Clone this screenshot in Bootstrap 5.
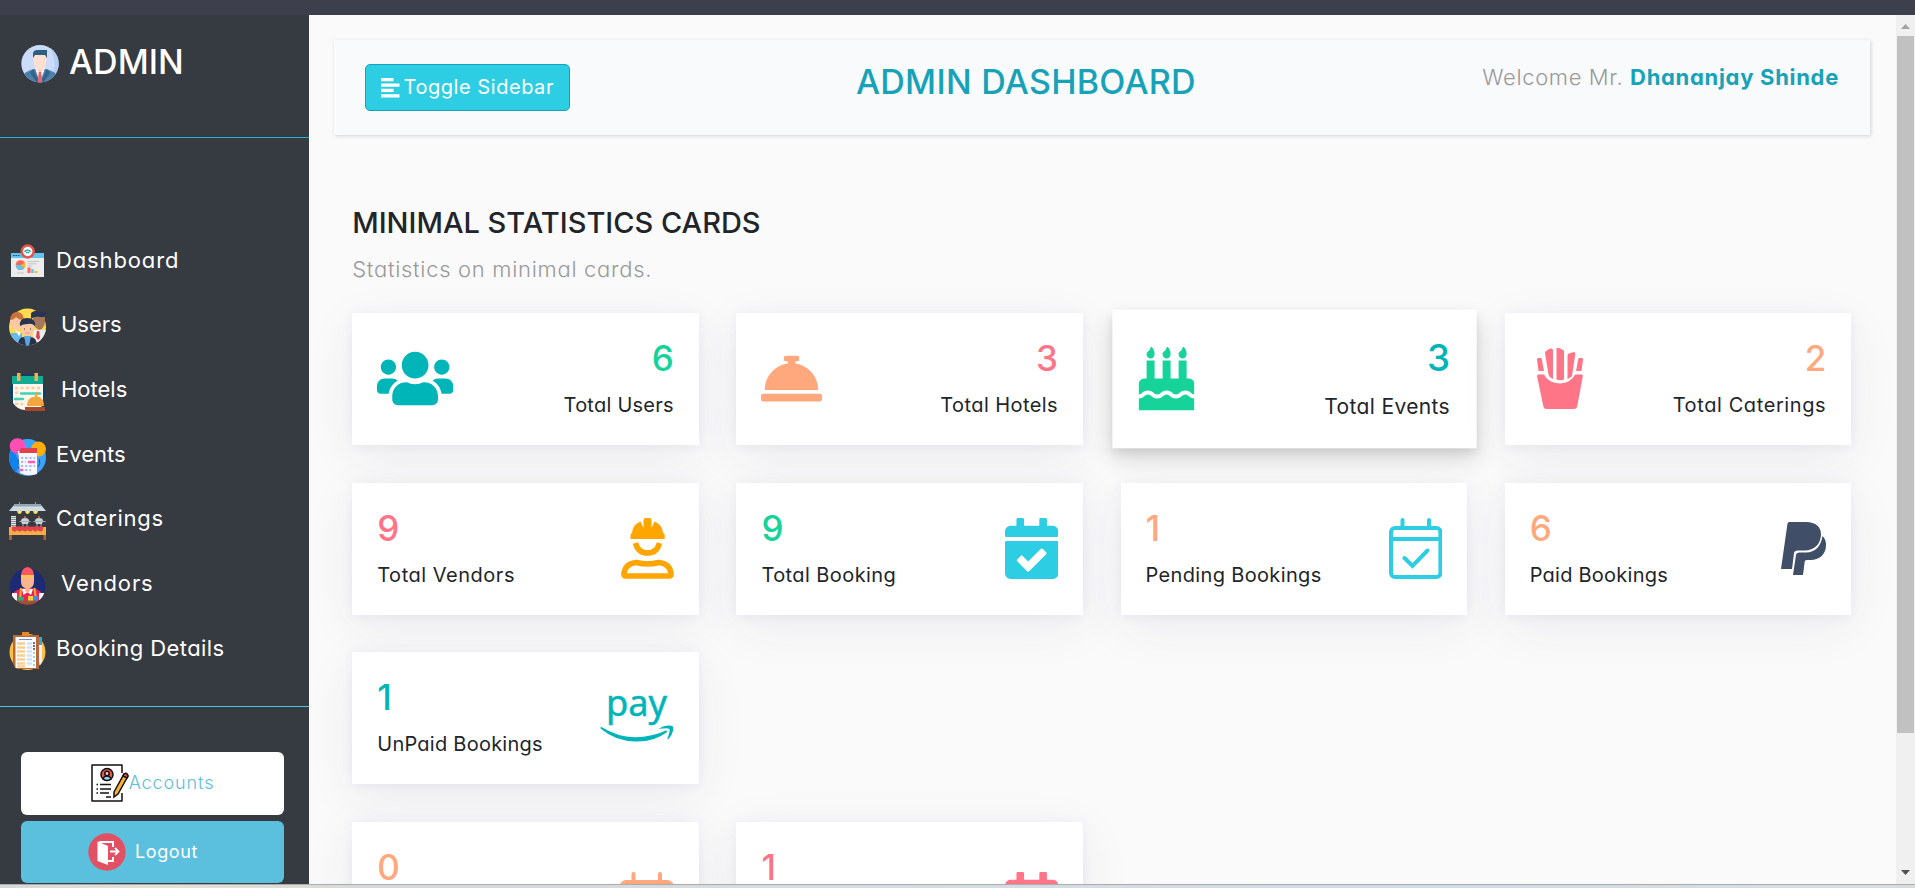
<!DOCTYPE html>
<html lang="en">
<head>
<meta charset="utf-8">
<title>Admin Dashboard</title>
<link href="https://cdn.jsdelivr.net/npm/bootstrap@5.3.0/dist/css/bootstrap.min.css" rel="stylesheet">
<style>
body{height:100vh;overflow:hidden;background:#fafafa;color:#212529;font-family:Inter,"Open Sans",sans-serif;font-feature-settings:"cv11";}
.topstrip{height:15px;background:#3e3f4c;flex:none}
.bottomstrip{height:4px;flex:none;border-top:1px solid #a9adb0;background:linear-gradient(90deg,#d5d8d9,#e6e0d2 8%,#d8dad9 18%,#d5dbe2 50%,#cfdbe6 75%,#d8dcde)}
.sidebar{width:309px;flex:none;background:#363a41;color:#fff}
.brand{height:123px;padding:28px 21px 0;border-bottom:1px solid #29b1cb}
.brand svg{margin-top:2px}
.brand-name{font-size:34px;line-height:37px;font-weight:500;margin-left:10px}
.side-nav{padding:90px 0 25px 9px;border-bottom:1px solid #5bc0de}
.side-nav a{height:64.67px;color:#fff;font-size:22px;text-decoration:none;display:flex;align-items:center}
.side-nav svg{width:38px;height:38px;flex:none;margin:5px 9px 0 0}
.side-nav .wide svg{margin-right:14px}
.side-btns{padding:45px 25px 0 21px}
.side-btns .btn{height:63px;border-radius:6px;border:0;font-size:18px}
.side-btns .btn+.btn{margin-top:6px;height:62px}
.side-btns span{margin-bottom:2px}
.btn-acc,.btn-acc:hover{background:#fff;color:#5bc0de;font-weight:300;letter-spacing:.9px}
.btn-out,.btn-out:hover{background:#5bc0de;color:#fff;letter-spacing:.6px}
.btn-out span{margin:0 19px 0 9px}
.content{padding:25px 26px 0 24.5px;min-width:0}
.head{height:95px;background:#f8fafc;box-shadow:1px 1px 4px rgba(0,0,0,.16);padding:0 31px}
.btn-toggle{margin-top:24px;width:205px;height:47px;background:#2dcee3;border:1px solid #17a2b8;border-radius:5px;color:#fff;font-size:20px;padding:0 0 0 15px;letter-spacing:.55px}
.btn-toggle span{margin-bottom:2px}
.title{margin:21px 0 0;font-size:34px;line-height:42px;font-weight:500;color:#17a2b8;letter-spacing:.26px}
.welcome{margin:20px 0 0;font-size:22px;line-height:34px;font-weight:300;color:#999;letter-spacing:.62px}
.welcome b{font-weight:700;color:#17a2b8;letter-spacing:.7px}
.sec{padding:70px 18.75px 0}
.sec h2{font-size:29px;line-height:36px;font-weight:500;margin:0 0 11px}
.sec p{font-size:22px;line-height:34px;font-weight:300;color:#999;margin:0 0 27px;letter-spacing:.7px}
.stats{--bs-gutter-x:37.5px;margin-bottom:37.67px}
.stat{height:132px;background:#fff;border:0;border-radius:0;box-shadow:0 12px 50px rgba(62,57,107,.07),0 2px 11px rgba(62,57,107,.06);padding:24px 25px 25px;display:flex;flex-direction:row;align-items:center;justify-content:space-between}
.stat.lifted{transform:scale(1.05);box-shadow:0 10px 20px rgba(0,0,0,.14),0 4px 8px rgba(0,0,0,.08)}
.stat.tall{height:162px}
.tall h3{height:102px}
.stat h3{font-size:35px;line-height:42px;font-weight:500;margin:0 0 11px}
.stat span{font-size:20px;line-height:30px;display:block;white-space:nowrap}
.stat svg{height:61px;flex:none}
.fries{margin-left:7px}
.paypal{margin-right:-1px}
.teal{color:#00b5b8}.green{color:#16d39a}.rose{color:#ff7588}.peach{color:#ffa87d}.sky{color:#2dcee3}.amber{color:orange}.navy{color:#404e67}
.sbar{width:19px;background:#f0f0f0;flex:none}
.sbar i{display:block;width:17px;height:697px;background:#c1c1c1;margin:0 1px}
.pay{font-family:"Noto Sans","Open Sans",sans-serif}
.ls2{letter-spacing:.25px}.ls3{letter-spacing:.35px}.ls4{letter-spacing:.42px}.ls5{letter-spacing:.52px}.ls6{letter-spacing:.6px}.ls7{letter-spacing:.72px}.ls8{letter-spacing:.87px}
</style>
</head>
<body class="d-flex flex-column">
<div class="topstrip"></div>
<div class="d-flex flex-fill overflow-hidden">
<aside class="sidebar">
 <div class="brand d-flex align-items-start">
  <svg width="38" height="38" viewBox="0 0 38 38"><defs><clipPath id="c"><circle cx="19" cy="18.700" r="18.700"/></clipPath></defs><g clip-path="url(#c)"><path fill="#cbdcfa" d="M0 0h38v38H0z"/><path fill="#b5cdf5" d="M28 0q9 18 3 30h7V0z"/><path fill="#4c80ac" d="M3 38V29q3-3 10-5h12q7 2 10 5v9z"/><path fill="#376486" d="M12 24l7 14 7-14 3 4-7 10h-6L9 28z"/><path fill="#fff" d="M14 23l5 15 5-15z"/><path fill="#ffc9ba" d="M15.500 19h7v5.500L19 28l-3.500-3.500z"/><path fill="#ffdfd1" d="M12.500 10h13v6q-1 9-6.500 9T12.500 16z"/><path fill="#2f5f80" d="M12 13V8q1-3 4-3h10v8l-2-3H14z"/><path fill="#df6977" d="M17.600 27h2.800l1 11h-4.800z"/></g></svg>
  <span class="brand-name">ADMIN</span>
 </div>
 <nav class="side-nav">
  <a href="#"><svg viewBox="0 0 38 38"><path fill="#ececec" d="M2 9h33v24H2z"/><path fill="#5fc4ef" d="M2 9h33v5H2z"/><path d="M4 11.500h7" stroke="#345" stroke-dasharray="1.500 1"/><circle cx="18.700" cy="7.500" r="7.200" fill="#e2574c"/><circle cx="18.700" cy="7.500" r="4.700" fill="#fff"/><path d="M15.500 8a3.200 3.200 0 0 1 6 0M17 8.500h3" stroke="#3aa" fill="none" stroke-width="1.500"/><circle cx="11.500" cy="21" r="4.800" fill="#ff6455"/><path fill="#ffb420" d="M11.500 21l4.500-2.500q1 3-1 6z"/><path fill="#5fc4ef" d="M11.500 21H6.700q.5 5 4.800 5 2 0 3.500-1.500z"/><path d="M18.500 17.500h11.500M18.500 19.800h9M18.500 22h4.500M8 29h7" stroke="#c4c4c4"/><path fill="#ff6455" d="M18.500 23.500h3V29h-3z"/><path fill="#5fc4ef" d="M22.200 25h2.500v4h-2.500z"/><path fill="#ffb420" d="M25.500 27h2.500v2h-2.500z"/></svg><span class="ls8">Dashboard</span></a>
  <a href="#" class="wide"><svg viewBox="0 0 38 38"><defs><clipPath id="u"><circle cx="18.500" cy="19" r="18.500"/></clipPath></defs><g clip-path="url(#u)"><path fill="#ffdb4d" d="M0 0h38v38H0z"/><path fill="#68b9ef" d="M0 25h13v13H0z"/><path fill="#e9edf5" d="M24 22h14v12H24z"/></g><path fill="#c9723a" d="M1 12Q2 3 9 4q6 1 6 9l-5 4-7-3z"/><path fill="#fbc9a6" d="M1 12q4 0 6-3 3 3 6 3 0 9-6 10-6-1-6-10z"/><path fill="#a5785e" d="M24 9h12q1 12-6 13-6-2-6-13z"/><path fill="#2a3352" d="M22 11V5q5-4 8-1l7-1q0 7-6 6-6-1-9 2z"/><g clip-path="url(#u)"><path fill="#fff" d="M6 22l4 6 2-3z"/><path fill="#e33d45" d="M28 23h2l1 7-2 2-2-3z"/><path fill="#27304e" d="M9 38q0-9 6-9l3 4 3-4q7 0 7 9z"/><path fill="#58a8e0" d="M15 28h7l-2 10h-3z"/></g><ellipse cx="18.500" cy="20.500" rx="7" ry="7.500" fill="#fbc9a6"/><path fill="#2a3352" d="M11 18q-1-8 7-8 9 0 8 8-3-3-7-2-5 0-8 2z"/><path d="M15.500 20.500v1M21.500 20.500v1" stroke="#433"/><path d="M16.500 25h4" stroke="#e88"/></svg><span>Users</span></a>
  <a href="#" class="wide"><svg viewBox="0 0 38 38"><circle cx="18.500" cy="19" r="18" fill="#0f4068"/><path fill="#fff7ef" d="M4 10h30v22l-5 5H15Q8 36 4 30z"/><path fill="#12ab94" d="M3 3h31v8H3z"/><path fill="#f5b04f" d="M8 0h3.500v8H8zM25.500 0H29v8h-3.500z"/><path d="M6 15h25M6 19.500h5M6 26h4M6 31h8" stroke="#fdcf9e" stroke-width="2.500" stroke-dasharray="3 2.500"/><path d="M12 20.500h19M6 26h8" stroke="#3fd3b2" stroke-width="2.500" stroke-linecap="round"/><path fill="#f3a73d" d="M18 33q0-9 8-9.500V19h2v4.500q7 .5 7 9.500z"/><path fill="#a64a2d" d="M16 34h20v4H16z"/></svg><span>Hotels</span></a>
  <a href="#"><svg viewBox="0 0 38 38"><circle cx="18.500" cy="19.500" r="18.500" fill="#3ba3fb"/><path fill="#0f82ee" d="M4 9q-9 14 3 26l3-10z"/><path d="M10 16q-2 5 0 8t-1 7M30 21q2 5-1 8" stroke="#274a9c" fill="none"/><circle cx="8.500" cy="8" r="7.800" fill="#ff4fb5"/><circle cx="29.500" cy="11" r="7.500" fill="#ffae0c"/><path fill="#f6f6ff" d="M9 13h19v23q-9 3-17-1z"/><path fill="#e04249" d="M12 10h16v5H10z"/><path d="M12 20h14M12 24h5M12 28h14M12 32h10" stroke="#a8b9ec" stroke-width="2.200" stroke-dasharray="2.200 2"/><path d="M19 24h7M11 32h3" stroke="#fb5db8" stroke-width="2.400"/></svg><span>Events</span></a>
  <a href="#"><svg viewBox="0 0 38 38"><path fill="#cfdce5" d="M5 3h27l5 6H0z"/><path fill="#95a5ad" d="M5 2h27v2.500H5z"/><path stroke="#4cc" d="M10.500 0v2M26.500 0v2"/><path fill="#f6e45a" d="M8 9h5q-.5 3-2.500 3T8 9zM16 9h5q-.5 3-2.500 3T16 9zM24 9h5q-.5 3-2.500 3T24 9z"/><path d="M4.500 14v11" stroke="#dfe6ea" stroke-width="5" stroke-dasharray="1.500 .5"/><path fill="#c8d1d6" d="M12 19q0-3 4-3t4 3l-1 3h-6zM26 19q0-3 4-3t4 3l-1 3h-6z"/><path d="M10.500 19.500h11M24.500 19.500h12M14 22v3M18 22v3M28 22v3M32 22v3" stroke="#a9b5bb"/><path fill="#e3444b" d="M15 14h2v2h-2zM29 14h2v2h-2z"/><path fill="#f6ad45" d="M0 25h37v8H0z"/><path fill="#ad6236" d="M0 33h3v5H0zM34.500 33h2.500v5h-2.500z"/><path fill="#e3444b" d="M3 24.500h31V28q-2.500 3-5.200 0-2.500 3-5.100 0-2.600 3-5.200 0-2.600 3-5.200 0-2.600 3-5.100 0-2.600 3-5.200 0z"/></svg><span class="ls7">Caterings</span></a>
  <a href="#" class="wide"><svg viewBox="0 0 38 38"><defs><clipPath id="v"><circle cx="18.500" cy="19.500" r="18"/></clipPath></defs><circle cx="18.500" cy="19.500" r="18" fill="#1d2b75"/><g clip-path="url(#v)"><path fill="#ea2457" d="M5 38V25q4-3 9-4h9q6 1 9 4v13z"/><path fill="#fff" d="M13 22h11l-2 6-3.500-3-4 3zM3 26h5v8H3zM30 26h5v8h-5z"/><path fill="#fbb034" d="M11 21h2l-1 12h-2zM24.500 21h2l1.500 12h-2z"/><path fill="#24b07c" d="M9 30h6v4H9z"/><path fill="#ffcb3d" d="M19 29h5v5h-5z"/><path fill="#3b8dea" d="M24 29h5v5h-5z"/><path fill="#9c5439" d="M3 33.500h31V38H3z"/></g><path fill="#fbb58e" d="M12 8h13v6q0 6-4 7v3l-2.500 2-2.500-2v-3q-4-1-4-7z"/><path fill="#fb5568" d="M12 9q0-8 6.500-9Q25 1 25 9z"/><path fill="#ffc93b" d="M12 8h13v2.200H12z"/></svg><span class="ls8">Vendors</span></a>
  <a href="#"><svg viewBox="0 0 38 38"><circle cx="18.500" cy="20" r="18" fill="#fdbf47"/><path fill="#b8693a" d="M4 3h26v34H8q-4-3-4-7z"/><path fill="#fdfdff" d="M6.500 5H27v31H6.500z"/><path fill="#e6892a" d="M13 0h7v4h-7z"/><path d="M10 7.500h13" stroke="#6a8fdc"/><path d="M8 11.500h8M8 15.500h8M8 19.500h8M8 23.500h8M8 27.500h8M8 31.500h8M8 34.500h8" stroke="#fbcf94" stroke-width="2.500"/><path d="M18 11.500h5M18 15.500h5M18 19.500h5M18 23.500h5M18 27.500h5M18 31.500h5" stroke="#d1e2fb" stroke-width="2.500"/><path d="M25 10v9" stroke="#445" stroke-width="1.500" stroke-dasharray="2 1"/><path d="M25 20v14" stroke="#7cc" stroke-width="1.500" stroke-dasharray="2 2"/><path fill="#eef1fa" d="M30 12h3v18l-1.500 3-1.500-3z"/><path fill="#3aa6cc" d="M30 5h3v8h-3z"/></svg><span class="ls4">Booking Details</span></a>
 </nav>
 <div class="side-btns d-flex flex-column">
  <a href="#" class="btn btn-acc d-flex align-items-center justify-content-center p-0"><svg width="38" height="38" viewBox="0 0 38 38" fill="none" stroke="#111" stroke-width="1.500"><path d="M31 9V1H1v36h30v-8" stroke-linejoin="round"/><circle cx="16" cy="10.500" r="6" fill="#ee5350"/><path d="M12 15q1-3 4-3t4 3q-4 3-8 0z" fill="#8fd3f8"/><circle cx="16" cy="9.500" r="2.200" fill="#fdd0a0"/><path d="M9 20.500h11M9 25h11M9 29h9M15 33h5M5.500 20.500H7M5.500 25H7M5.500 29H7"/><path d="M23 28L33 10l4 2-10 18-4 3z" fill="#fbb034"/><path d="M33 10q3-2 4 2l-1 2-4-2z" fill="#ee5350"/></svg><span>Accounts</span></a>
  <a href="#" class="btn btn-out d-flex align-items-center justify-content-center p-0"><svg width="38" height="38" viewBox="0 0 38 38"><circle cx="19" cy="19" r="18.700" fill="#e25163"/><path d="M11 9h14v5M25 24v4h-6" fill="none" stroke="#fff" stroke-width="2"/><path fill="#fff" d="M9.500 8.500L20 13v19L9.500 28z"/><path d="M22 18.500h8M27 15l3.500 3.500L27 22" fill="none" stroke="#fff" stroke-width="1.800"/></svg><span>Logout</span></a>
 </div>
</aside>
<main class="content flex-fill">
 <header class="head d-flex justify-content-between align-items-start">
  <button class="btn btn-toggle d-flex align-items-center"><svg width="19" height="20" viewBox="0 0 19 20" class="me-1"><path fill="#fff" d="M0 0h12.500v3.200H0zM0 5.500h18.500v3.200H0zM0 10.800h12.500V14H0zM0 16.200h18.500v3.200H0z"/></svg><span>Toggle Sidebar</span></button>
  <h1 class="title">ADMIN DASHBOARD</h1>
  <p class="welcome">Welcome Mr. <b>Dhananjay Shinde</b></p>
 </header>
 <section class="sec">
  <h2>MINIMAL STATISTICS CARDS</h2>
  <p>Statistics on minimal cards.</p>
  <div class="row stats">
   <div class="col-3"><div class="card stat"><svg class="teal" viewBox="0 0 640 512" fill="currentColor"><path d="M96 224c35.300 0 64-28.700 64-64s-28.700-64-64-64-64 28.700-64 64 28.700 64 64 64zm448 0c35.300 0 64-28.700 64-64s-28.700-64-64-64-64 28.700-64 64 28.700 64 64 64zm32 32h-64c-17.600 0-33.500 7.100-45.100 18.600 40.300 22.100 68.900 62 75.100 109.400h66c17.700 0 32-14.300 32-32v-32c0-35.300-28.700-64-64-64zm-256 0c61.900 0 112-50.100 112-112S381.900 32 320 32 208 82.100 208 144s50.100 112 112 112zm76.800 32h-8.300c-20.800 10-43.900 16-68.500 16s-47.600-6-68.500-16h-8.300C179.600 288 128 339.600 128 403.200V432c0 26.500 21.500 48 48 48h288c26.500 0 48-21.500 48-48v-28.800c0-63.600-51.600-115.200-115.200-115.200zm-223.700-13.400C161.500 263.100 145.600 256 128 256H64c-35.300 0-64 28.700-64 64v32c0 17.700 14.300 32 32 32h65.900c6.300-47.400 34.900-87.300 75.200-109.400z"/></svg><div class="text-end"><h3 class="green">6</h3><span class="ls2">Total Users</span></div></div></div>
   <div class="col-3"><div class="card stat"><svg class="peach" viewBox="0 0 512 512" fill="currentColor"><path d="M288 130.540V112h16c8.840 0 16-7.160 16-16V80c0-8.840-7.160-16-16-16h-96c-8.840 0-16 7.160-16 16v16c0 8.840 7.160 16 16 16h16v18.540C115.490 146.110 32 239.180 32 352h448c0-112.820-83.490-205.890-192-221.460zM496 384H16c-8.840 0-16 7.160-16 16v32c0 8.840 7.160 16 16 16h480c8.840 0 16-7.160 16-16v-32c0-8.840-7.160-16-16-16z"/></svg><div class="text-end"><h3 class="rose">3</h3><span class="ls4">Total Hotels</span></div></div></div>
   <div class="col-3"><div class="card stat lifted"><svg class="green" viewBox="0 0 448 512" fill="currentColor"><path d="M448 384c-28.020 0-31.260-32-74.500-32-43.430 0-46.825 32-74.750 32-27.695 0-31.454-32-74.750-32-42.842 0-47.218 32-74.500 32-28.148 0-31.202-32-74.750-32-43.547 0-46.653 32-74.750 32v-80c0-26.500 21.500-48 48-48h16V112h64v144h64V112h64v144h64V112h64v144h16c26.500 0 48 21.500 48 48v80zm0 128H0v-96c43.356 0 46.767-32 74.750-32 27.951 0 31.253 32 74.750 32 42.843 0 47.217-32 74.500-32 28.148 0 31.201 32 74.750 32 43.357 0 46.767-32 74.750-32 27.488 0 31.252 32 74.500 32v96zM96 96c-17.750 0-32-14.250-32-32 0-31 32-23 32-64 12 0 32 29.500 32 56s-14.250 40-32 40zm128 0c-17.750 0-32-14.250-32-32 0-31 32-23 32-64 12 0 32 29.500 32 56s-14.250 40-32 40zm128 0c-17.750 0-32-14.250-32-32 0-31 32-23 32-64 12 0 32 29.500 32 56s-14.250 40-32 40z"/></svg><div class="text-end"><h3 class="teal">3</h3><span class="ls3">Total Events</span></div></div></div>
   <div class="col-3"><div class="card stat"><svg class="rose fries" viewBox="0 0 46 61" fill="currentColor"><path d="M0 28q0-1.500 1.500-1.500H7q4 8.500 16 9 11-.5 15-9h6.500q1.500 0 1.300 1.500l-5.500 30q-.6 3-3.300 3H9.500q-2.700 0-3.200-3zM0 11.500q-.2-1.500 1.300-1.500h2q1.300 0 1.500 1.300L7 23H1.500zM46 11.500q.2-1.500-1.300-1.500h-2q-1.300 0-1.500 1.300L39 23h5.500zM8 5q0-1 .8-1.800L12.500.8Q16 0 16 2.500V31q-4-2-4.500-4.500zM19.500 0q2-.3 4 .7 3.500 1.200 3.500 2.500V31.500q-3.500 1.300-7.500 0zM30.500 7.500q0-1.500 1.500-2l4-1.200q2.500-.6 2.300 1.500L35 28q-2 2-4.500 3z"/></svg><div class="text-end"><h3 class="peach">2</h3><span class="ls6">Total Caterings</span></div></div></div>
  </div>
  <div class="row stats">
   <div class="col-3"><div class="card stat"><div><h3 class="rose">9</h3><span class="ls5">Total Vendors</span></div><svg class="amber" viewBox="0 0 53 61" fill="currentColor"><path d="M9.500 21v-4q0-1.500 1.500-2 .3-8 8.500-11.500L22.500 10V2q0-2 2-2h4q2 0 2 2v8l3-6.500Q41.500 7 42 15q1.700.5 1.700 2v4z"/><path d="M14.500 25q2.500 10 12 10t12-10" fill="none" stroke="currentColor" stroke-width="5.500"/><path d="M4.500 58q-2 0-1.500-3 1.500-9.500 12.500-10.500 11 3 22 0 11 1 12.500 10.500.5 3-1.500 3z" fill="none" stroke="currentColor" stroke-width="5.500"/></svg></div></div>
   <div class="col-3"><div class="card stat"><div><h3 class="green">9</h3><span class="ls4">Total Booking</span></div><svg class="sky" viewBox="0 0 448 512" fill="currentColor"><path id="calsolid" d="M436 160H12c-6.627 0-12-5.373-12-12v-36c0-26.510 21.490-48 48-48h48V12c0-6.627 5.373-12 12-12h40c6.627 0 12 5.373 12 12v52h128V12c0-6.627 5.373-12 12-12h40c6.627 0 12 5.373 12 12v52h48c26.510 0 48 21.490 48 48v36c0 6.627-5.373 12-12 12zM12 192h424c6.627 0 12 5.373 12 12v260c0 26.510-21.490 48-48 48H48c-26.510 0-48-21.490-48-48V204c0-6.627 5.373-12 12-12zm333.296 95.947l-28.169-28.398c-4.667-4.705-12.265-4.736-16.970-.068L194.120 364.665l-45.980-46.352c-4.667-4.705-12.266-4.736-16.971-.068l-28.397 28.170c-4.705 4.667-4.736 12.265-.068 16.970l82.601 83.269c4.667 4.705 12.265 4.736 16.970.068l142.953-141.805c4.705-4.667 4.736-12.265.068-16.970z"/></svg></div></div>
   <div class="col-3"><div class="card stat"><div><h3 class="peach">1</h3><span class="ls3">Pending Bookings</span></div><svg class="sky" viewBox="0 0 53.400 61" fill="none" stroke="currentColor" stroke-width="4" stroke-linecap="round"><rect x="2" y="10" width="49.400" height="49" rx="4"/><path d="M2 21h49.400M13.500 2v8M40 2v8M15.500 40l8 8L38.500 32.500"/></svg></div></div>
   <div class="col-3"><div class="card stat"><div><h3 class="peach">6</h3><span class="ls2">Paid Bookings</span></div><svg class="navy paypal" viewBox="0 0 46 61" fill="currentColor"><path d="M6.500 5.500q.3-1.500 1.800-1.500H25q15 .5 15 13-1.500 15-16.500 15.500h-7Q13.500 32.500 13 35l-2 16H0z"/><path d="M41.500 18q4.500 4 3.300 12-2.500 11.500-15 12h-4.300q-1.500 0-1.800 1.500L22 57H12l3-20q.3-2.500 3-2.500h7Q39 34 41.500 18z"/></svg></div></div>
  </div>
  <div class="row stats">
   <div class="col-3"><div class="card stat"><div><h3 class="teal">1</h3><span class="ls2">UnPaid Bookings</span></div><svg class="teal" viewBox="0 0 74 61" fill="currentColor"><text class="pay" x="6" y="29" font-size="37" textLength="61" lengthAdjust="spacingAndGlyphs" stroke="currentColor" stroke-width=".5">pay</text><path transform="translate(0 -2)" d="M1.500 42q17 10.500 34 10.200Q52 52 66 45.500q2 0 .5 2Q54 57 35.500 56.500 15 56 .5 43.500q-.5-1.500 1-1.500zM59 43.500q6-4 12.500-2.700 2.500.5 1.500 5-1 5-4.500 8.200-1.500.5-1-.7 2.800-7 2-9.300-2-1.500-10-.2-1.300 0-.5-.3z"/></svg></div></div>
  </div>
  <div class="row stats">
   <div class="col-3"><div class="card stat tall"><h3 class="peach">0</h3><svg class="peach" viewBox="0 0 53.400 61" fill="none" stroke="currentColor" stroke-width="4" stroke-linecap="round"><rect x="2" y="10" width="49.400" height="49" rx="4"/><path d="M2 13h49.400M2 17h49.400M13.500 2v8M40 2v8"/></svg></div></div>
   <div class="col-3"><div class="card stat tall"><h3 class="rose">1</h3><svg class="rose" viewBox="0 0 448 512" fill="currentColor"><use href="#calsolid"/></svg></div></div>
  </div>
 </section>
</main>
<div class="sbar d-flex flex-column"><svg width="19" height="21" viewBox="0 0 19 21"><path fill="#a3a3a3" d="M5 14h9L9.500 9z"/></svg><i></i><svg class="mt-auto" width="19" height="21" viewBox="0 0 19 21"><path fill="#505050" d="M5 7h9l-4.500 5z"/></svg></div>
</div>
<div class="bottomstrip"></div>
<script src="https://cdn.jsdelivr.net/npm/bootstrap@5.3.0/dist/js/bootstrap.bundle.min.js"></script>
</body>
</html>
